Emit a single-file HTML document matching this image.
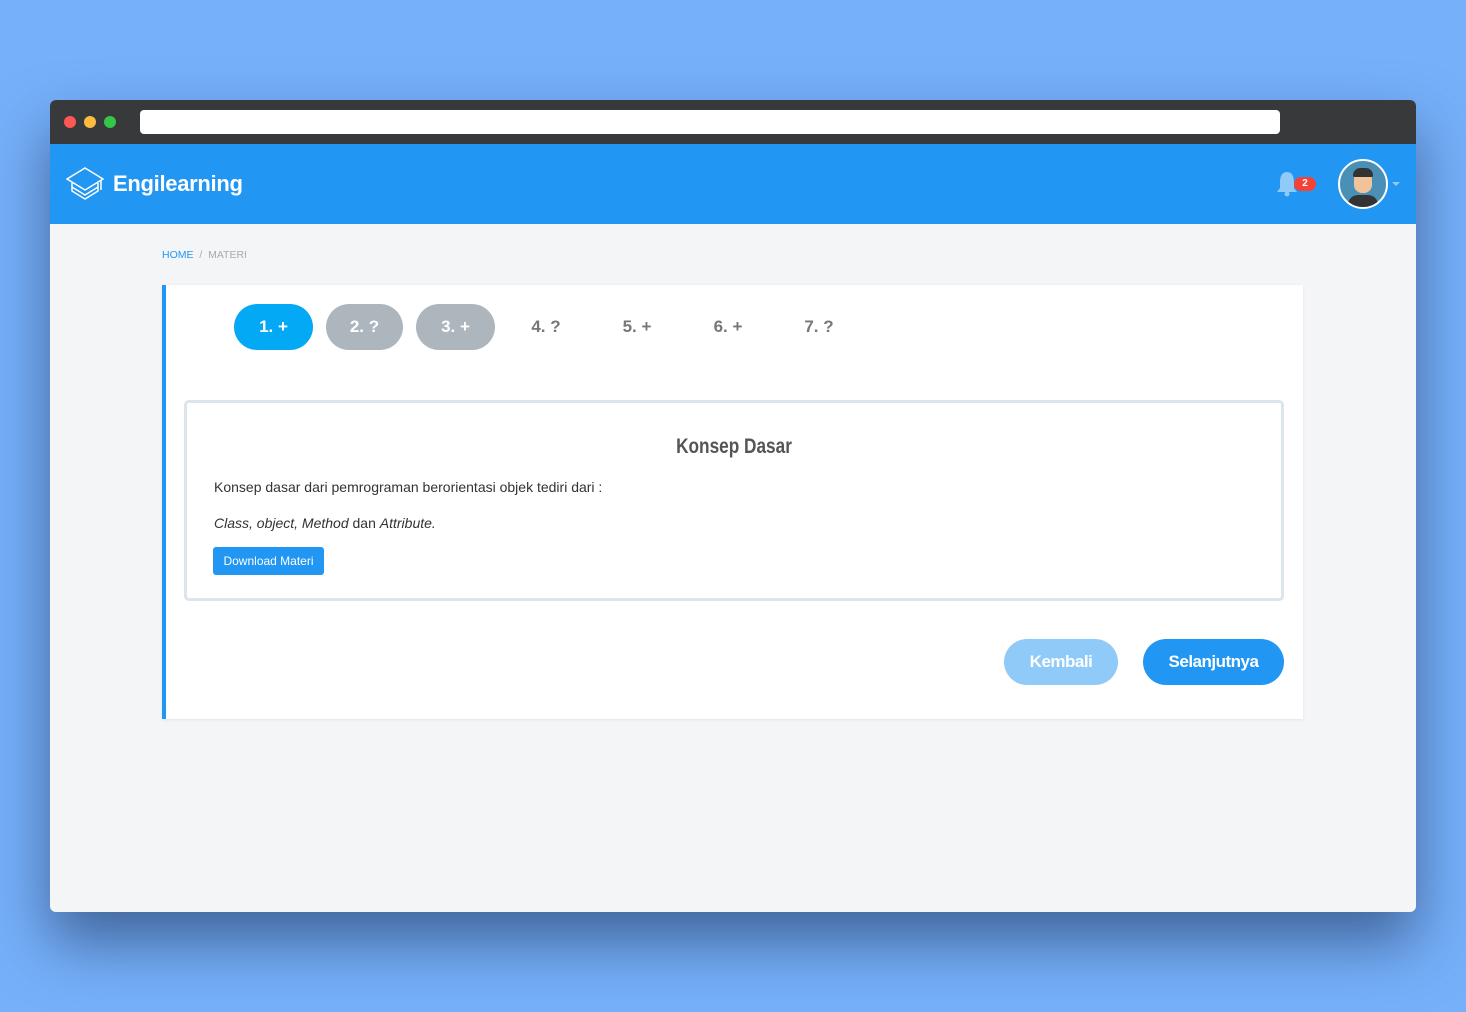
<!DOCTYPE html>
<html><head><meta charset="utf-8"><style>
*{box-sizing:border-box;margin:0;padding:0}
body{width:1466px;height:1012px;background:#76b0fa;font-family:"Liberation Sans",sans-serif;position:relative;overflow:hidden}
.win{position:absolute;left:50px;top:100px;width:1366px;height:812px;border-radius:6px;overflow:hidden;background:#f4f5f7;box-shadow:0 30px 60px rgba(30,50,90,.6)}
.bar{height:44px;background:#38393b;position:relative}
.dot{position:absolute;top:16px;width:12px;height:12px;border-radius:50%}
.url{position:absolute;left:90px;top:10px;width:1140px;height:24px;background:#fff;border-radius:4px}
.nav{height:80px;background:#2196f3;position:relative}
.logo{position:absolute;left:63px;top:27px;color:#fff;font-size:22px;font-weight:bold;letter-spacing:-.3px}
.bc{position:absolute;left:112px;top:149px;font-size:10.5px;color:#aaa}
.bc span{color:#2196f3}
.card{position:absolute;left:112px;top:185px;width:1141px;height:434px;background:#fff;border-left:4px solid #2196f3;box-shadow:0 1px 3px rgba(0,0,0,.08)}
.step{position:absolute;top:19px;height:46px;border-radius:23px;font-weight:bold;font-size:17px;color:#fff;text-align:center;line-height:46px}
.inner{position:absolute;left:18px;top:115px;width:1100px;height:201px;border:3px solid #dce4ec;border-radius:5px}
.btn{position:absolute;top:354px;height:46px;border-radius:23px;color:#fff;font-weight:bold;font-size:17px;text-align:center;line-height:46px;letter-spacing:-.5px}
</style></head><body>
<div class="win">
<div class="bar"><div class="dot" style="left:14px;background:#fc5753"></div><div class="dot" style="left:34px;background:#fdbc40"></div><div class="dot" style="left:54px;background:#33c748"></div><div class="url"></div></div>
<div class="nav">
<svg style="position:absolute;left:16px;top:22px" width="38" height="36" viewBox="0 0 38 36" fill="none" stroke="#fff" stroke-width="1.5"><path d="M1 13 L19 2 L37 13 L19 24 Z"/><path d="M6 17 V25 L19 33 L32 25 V17"/><path d="M6 21 L19 29 L32 21"/><path d="M35 14 V24"/></svg>
<div class="logo">Engilearning</div>
<svg style="position:absolute;left:1226px;top:27px" width="22" height="26" viewBox="0 0 22 26"><path d="M11 1 C5 1 4 7 4 12 V17 L1 21 H21 L18 17 V12 C18 7 17 1 11 1Z" fill="#90caf9"/><circle cx="11" cy="23" r="2.5" fill="#90caf9"/></svg>
<div style="position:absolute;left:1244px;top:33px;width:22px;height:14px;background:#f44336;border-radius:7px;color:#fff;font-size:10px;font-weight:bold;text-align:center;line-height:14px">2</div>
<div style="position:absolute;left:1288px;top:15px;width:50px;height:50px;border-radius:50%;border:2px solid #fff;background:#4a8fb5;overflow:hidden">
<div style="position:absolute;left:8px;top:34px;width:30px;height:20px;background:#333;border-radius:10px 10px 0 0"></div>
<div style="position:absolute;left:14px;top:10px;width:18px;height:22px;background:#f0c39a;border-radius:8px"></div>
<div style="position:absolute;left:13px;top:7px;width:20px;height:9px;background:#333;border-radius:9px 9px 2px 2px"></div>
</div>
<div style="position:absolute;left:1342px;top:38px;border:4px solid transparent;border-top:4px solid #90caf9"></div>
</div>
<div class="bc"><span>HOME</span> &nbsp;/&nbsp; MATERI</div>
<div class="card">
<div class="step" style="left:68px;width:79px;background:#03a9f4">1. +</div>
<div class="step" style="left:160px;width:77px;background:#adb5bd">2. ?</div>
<div class="step" style="left:250px;width:79px;background:#adb5bd">3. +</div>
<div class="step" style="left:350px;width:60px;color:#777">4. ?</div>
<div class="step" style="left:441px;width:60px;color:#777">5. +</div>
<div class="step" style="left:532px;width:60px;color:#777">6. +</div>
<div class="step" style="left:623px;width:60px;color:#777">7. ?</div>
<div class="inner">
<div style="position:absolute;top:32px;width:100%;text-align:center;font-size:21px;font-weight:bold;color:#555;transform:scaleX(.82)">Konsep Dasar</div>
<div style="position:absolute;left:27px;top:76px;font-size:14px;color:#333">Konsep dasar dari pemrograman berorientasi objek tediri dari :</div>
<div style="position:absolute;left:27px;top:112px;font-size:14px;color:#333"><i>Class, object, Method</i> dan <i>Attribute.</i></div>
<div style="position:absolute;left:26px;top:144px;width:111px;height:28px;background:#2196f3;border-radius:3px;color:#fff;font-size:12px;text-align:center;line-height:28px">Download Materi</div>
</div>
<div class="btn" style="left:838px;width:114px;background:#90caf9">Kembali</div>
<div class="btn" style="left:977px;width:141px;background:#2196f3">Selanjutnya</div>
</div>
</div>
</body></html>
